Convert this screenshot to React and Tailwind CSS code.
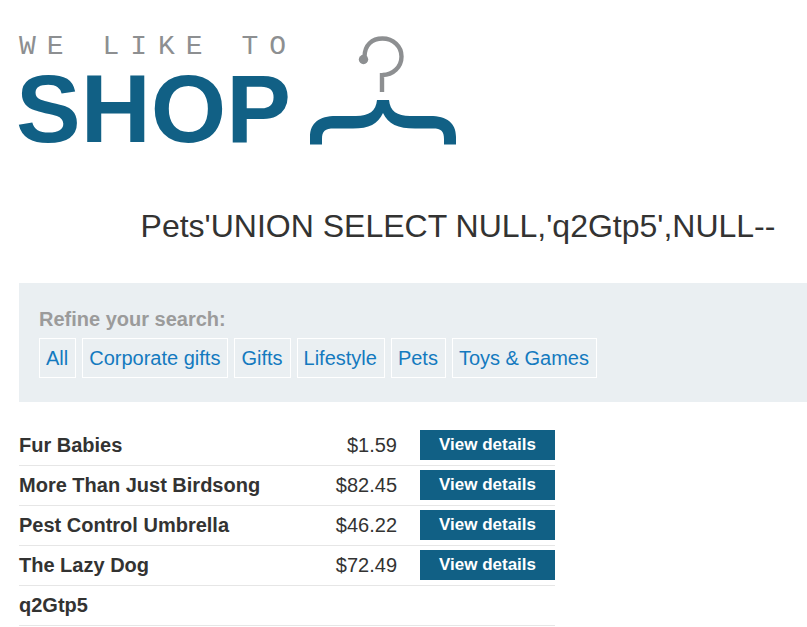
const categories = ["All", "Corporate gifts", "Gifts", "Lifestyle", "Pets", "Toys & Games"];

const products = [
  { name: "Fur Babies", price: "$1.59" },
  { name: "More Than Just Birdsong", price: "$82.45" },
  { name: "Pest Control Umbrella", price: "$46.22" },
  { name: "The Lazy Dog", price: "$72.49" },
  { name: "q2Gtp5" },
];

function Hanger() {
  return (
    <svg className="h-[110px] w-[148px] shrink-0" viewBox="0 0 148 110" fill="none" aria-hidden="true">
      <path d="M55.5 22C55.5 10 63 3.5 73.500 3.500C84 3.500 92.500 11 92.500 21.500C92.500 32 84 40 73.500 40M73 38V57" stroke="#8d8f91" strokeWidth="4.400" />
      <circle cx="54.500" cy="24.500" r="4.700" fill="#8d8f91" />
      <path
        d="M68 65H80C81 76 88 81 101 81H121C138 81 147 88 147 102V109.500H135V104C135 96 132 93.500 124 93.500H106C89 93.500 79 89 74 78C69 89 60 93.500 44 93.500H25C16 93.500 13 96 13 104V109.500H1V102C1 88 10 81 27 81H47C60 81 67 76 68 65Z"
        fill="#116085"
      />
    </svg>
  );
}

function Logo() {
  return (
    <a href="#" className="flex items-end gap-4" aria-label="We like to shop">
      <span className="flex flex-col">
        <span className="w-[274px] font-['Liberation_Mono',monospace] text-[28px] leading-[28px] tracking-[11px] whitespace-nowrap text-[#8d8f91]">
          WE LIKE TO
        </span>
        <span className="-ml-[3px] mt-[6px] h-[78px] text-[97px] leading-[84px] font-bold text-[#116085]">SHOP</span>
      </span>
      <Hanger />
    </a>
  );
}

export default function App() {
  return (
    <div className="min-h-screen overflow-x-hidden bg-white pl-[19px] font-['Liberation_Sans',Arial,sans-serif] text-[20px] leading-6 text-[#333332]">
      <header className="flex pt-[33px]">
        <Logo />
      </header>

      <main>
        <h1 className="mt-[61px] pl-[90px] text-center text-[32px] leading-[40px] whitespace-nowrap">
          Pets'UNION SELECT NULL,'q2Gtp5',NULL--
        </h1>

        <nav aria-labelledby="refine" className="mt-[37px] bg-[#eaeff2] px-5 pt-6 pb-6">
          <p id="refine" className="font-bold text-[#9b9b9b]">Refine your search:</p>
          <div className="mt-[7px] flex flex-wrap gap-[6px]">
            {categories.map((category) => (
              <a
                key={category}
                href="#"
                className="border border-white py-[7px] pr-[7px] pl-[6px] whitespace-nowrap text-[#147abf]"
              >
                {category}
              </a>
            ))}
          </div>
        </nav>

        <table className="mt-[23px] w-full max-w-[536px] border-collapse">
          <tbody>
            {products.map((product) => (
              <tr key={product.name} className="h-10 border-b border-[#e6e6e6]">
                <th scope="row" className="p-0 text-left font-bold">{product.name}</th>
                <td className="p-0 pr-[23px] text-right">{product.price}</td>
                <td className="w-[135px] p-0">
                  {product.price && (
                    <a href="#" className="block bg-[#116085] py-[3px] text-center text-[17px] leading-6 font-bold text-white">
                      View details
                    </a>
                  )}
                </td>
              </tr>
            ))}
          </tbody>
        </table>
      </main>
    </div>
  );
}
